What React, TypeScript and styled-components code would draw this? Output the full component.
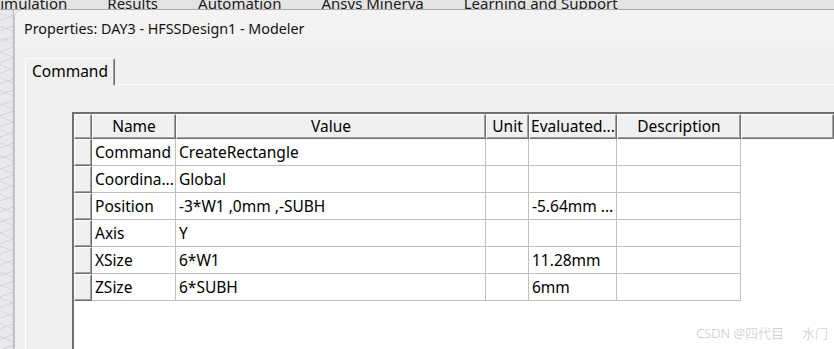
import React from "react";
import styled, { createGlobalStyle } from "styled-components";

const GlobalStyle = createGlobalStyle`
  html, body { margin: 0; padding: 0; background: #f0f0f0; }
  body { width: 834px; height: 349px; overflow: hidden; }
  * { box-sizing: border-box; }
`;

const FONT = `"Noto Sans", "Segoe UI", "Liberation Sans", sans-serif`;

const Page = styled.div`
  position: relative;
  width: 834px;
  height: 349px;
  overflow: hidden;
  display: flex;
  flex-direction: column;
  font-family: ${FONT};
  color: #000;
`;

const MenuBar = styled.div`
  height: 10px;
  flex: none;
  display: flex;
  gap: 40px;
  overflow: hidden;
  background: #e4e4e4;
  border-bottom: 1px solid #a9a9a9;
`;

const MenuItem = styled.span<{ $shift?: number; $extra?: number }>`
  font-size: 15px;
  line-height: 16px;
  margin-top: -5px;
  margin-left: ${(p) => p.$shift ?? 0}px;
  white-space: nowrap;
  color: #1a1a1a;
`;

const Workspace = styled.div`
  flex: 1;
  min-height: 0;
  display: flex;
`;

const ModelerStrip = styled.div`
  width: 14px;
  flex: none;
  background-color: #e9e9ec;
  background-image:
    repeating-linear-gradient(160deg, transparent 0 9px, #d3d3de 9px 10px),
    repeating-linear-gradient(22deg, transparent 0 11px, #d8d8e2 11px 12px);
  box-shadow: inset -2px 0 2px -1px #b8b8b8;
`;

const Dialog = styled.div`
  flex: 1;
  display: flex;
  flex-direction: column;
  background: #f3f3f3;
  border-left: 1px solid #c4c4c4;
  border-top-left-radius: 8px;
`;

const TitleBar = styled.div`
  height: 37px;
  flex: none;
  display: flex;
  align-items: center;
  padding-left: 9px;
  font-size: 14.3px;
  color: #111;
`;

const DialogBody = styled.div`
  flex: 1;
  min-height: 0;
  display: flex;
  flex-direction: column;
  background: #f0f0f0;
  padding: 11px 0 0 10px;
`;

const TabStrip = styled.div`
  height: 27px;
  flex: none;
  display: flex;
`;

const Tab = styled.div`
  width: 90px;
  height: 27px;
  border-top: 1px solid #ffffff;
  border-left: 1px solid #ffffff;
  border-right: 1px solid #696969;
  box-shadow: inset -1px 0 0 #a0a0a0;
  border-top-right-radius: 2px;
  padding-left: 6px;
  display: flex;
  align-items: center;
  font-size: 15.5px;
  padding-bottom: 2px;
`;

const TabLine = styled.div`
  flex: 1;
  border-bottom: 1px solid #ffffff;
`;

const TabPanel = styled.div`
  flex: 1;
  min-height: 0;
  display: flex;
  border-left: 1px solid #ffffff;
  padding: 27px 0 0 46px;
`;

const Grid = styled.div`
  flex: 1;
  background: #ffffff;
  border-top: 2px solid #6f6f6f;
  border-left: 2px solid #6f6f6f;
  display: flex;
  flex-direction: column;
`;

const COLS = "18px 84px 310px 43px 88px 124px";

const HeaderRow = styled.div`
  display: grid;
  grid-template-columns: ${COLS} 1fr;
  height: 25px;
`;

const DataRow = styled.div`
  display: grid;
  grid-template-columns: ${COLS};
  height: 27px;
`;

const RaisedCell = styled.div`
  background: #f0f0f0;
  border-top: 1px solid #ffffff;
  border-left: 1px solid #ffffff;
  border-right: 1px solid #6f6f6f;
  border-bottom: 1px solid #6f6f6f;
  box-shadow: inset -1px -1px 0 #a0a0a0;
`;

const HeaderCell = styled(RaisedCell)`
  display: flex;
  align-items: center;
  justify-content: center;
  font-size: 15.5px;
  white-space: nowrap;
  overflow: hidden;
  padding-bottom: 1px;
`;

const DataCell = styled.div`
  display: flex;
  align-items: center;
  padding: 0 0 1px 3px;
  border-right: 1px solid #c0c0c0;
  border-bottom: 1px solid #c0c0c0;
  font-size: 15.5px;
  white-space: nowrap;
  overflow: hidden;
`;

const Watermark = styled.div`
  position: absolute;
  right: 6px;
  bottom: 7px;
  display: flex;
  gap: 18px;
  font-family: "Noto Sans", "Noto Sans CJK SC", sans-serif;
  font-size: 13px;
  font-weight: 300;
  color: #c6c6c6;
  white-space: pre;
`;

const menu = [
  { label: "Simulation", shift: -8 },
  { label: "Results" },
  { label: "Automation" },
  { label: "Ansys Minerva" },
  { label: "Learning and Support" },
];

const headers = ["Name", "Value", "Unit", "Evaluated...", "Description"];

const rows: string[][] = [
  ["Command", "CreateRectangle", "", "", ""],
  ["Coordina...", "Global", "", "", ""],
  ["Position", "-3*W1 ,0mm ,-SUBH", "", "-5.64mm ...", ""],
  ["Axis", "Y", "", "", ""],
  ["XSize", "6*W1", "", "11.28mm", ""],
  ["ZSize", "6*SUBH", "", "6mm", ""],
];

export default function App() {
  return (
    <Page>
      <GlobalStyle />
      <MenuBar>
        {menu.map((m) => (
          <MenuItem key={m.label} $shift={m.shift}>
            {m.label}
          </MenuItem>
        ))}
      </MenuBar>
      <Workspace>
        <ModelerStrip />
        <Dialog>
          <TitleBar>Properties: DAY3 - HFSSDesign1 - Modeler</TitleBar>
          <DialogBody>
            <TabStrip>
              <Tab>Command</Tab>
              <TabLine />
            </TabStrip>
            <TabPanel>
              <Grid>
                <HeaderRow>
                  <RaisedCell />
                  {headers.map((h) => (
                    <HeaderCell key={h}>{h}</HeaderCell>
                  ))}
                  <RaisedCell />
                </HeaderRow>
                {rows.map((r) => (
                  <DataRow key={r[0]}>
                    <RaisedCell />
                    {r.map((c, i) => (
                      <DataCell key={i}>{c}</DataCell>
                    ))}
                  </DataRow>
                ))}
              </Grid>
            </TabPanel>
          </DialogBody>
        </Dialog>
      </Workspace>
      <Watermark>
        <span>CSDN @四代目</span>
        <span>水门</span>
      </Watermark>
    </Page>
  );
}
